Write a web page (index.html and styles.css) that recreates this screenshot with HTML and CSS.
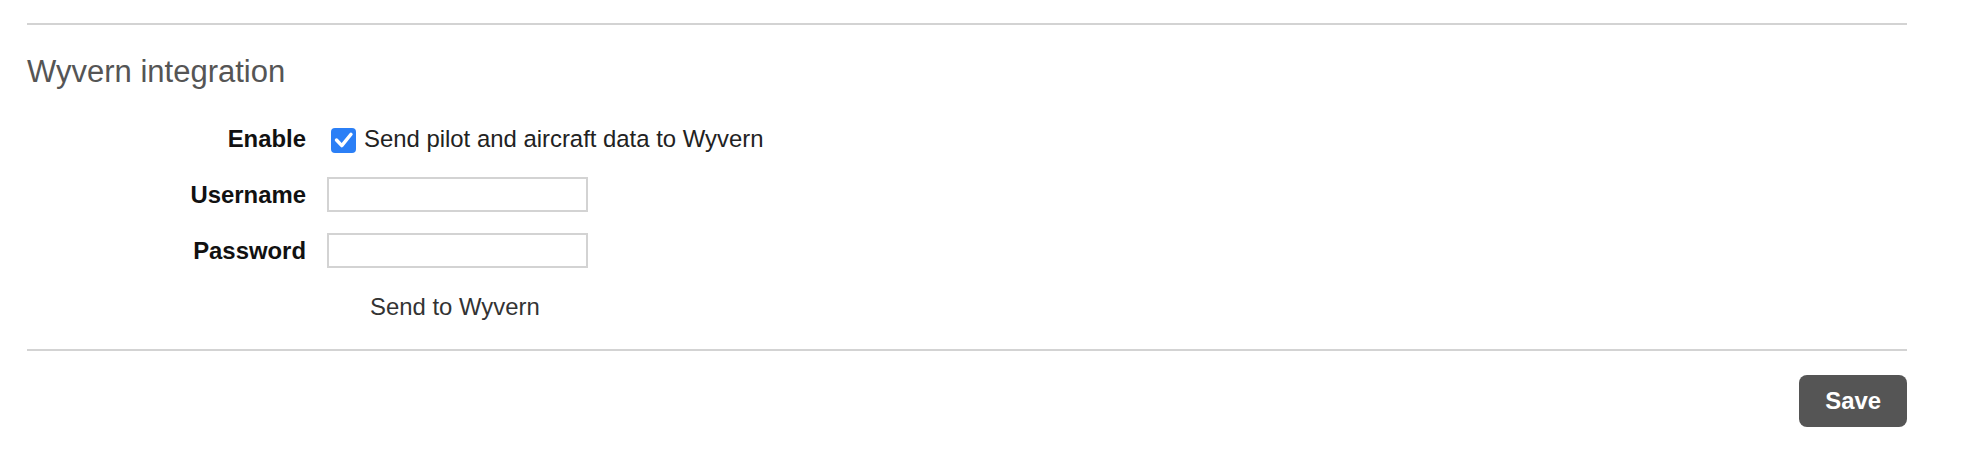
FILE: index.html
```html
<!DOCTYPE html>
<html lang="en">
<head>
<meta charset="utf-8">
<title>Wyvern integration</title>
<link rel="stylesheet" href="styles.css">
</head>
<body>
<div class="page">
  <hr class="rule">
  <h2 class="section-title">Wyvern integration</h2>
  <form class="form-grid">
    <span class="field-label field-label--top">Enable</span>
    <label class="check-row">
      <span class="checkbox" role="checkbox" aria-checked="true">
        <svg viewBox="0 0 25 25" width="25" height="25"><path d="M5.5 12 L10.8 17.6 L20 6.2" fill="none" stroke="#fff" stroke-width="3.4" stroke-linecap="round" stroke-linejoin="round"/></svg>
      </span>
      <span class="check-text">Send pilot and aircraft data to Wyvern</span>
    </label>

    <label class="field-label" for="wy-user">Username</label>
    <input class="text-input" id="wy-user" type="text">

    <label class="field-label" for="wy-pass">Password</label>
    <input class="text-input" id="wy-pass" type="password">

    <span class="spacer"></span>
    <button class="link-button" type="button">Send to Wyvern</button>
  </form>
  <hr class="rule rule--bottom">
  <div class="actions">
    <button class="save-button" type="button">Save</button>
  </div>
</div>
</body>
</html>
```
FILE: styles.css
```css
html, body {
  margin: 0;
  padding: 0;
  background: #fff;
}

body {
  font-family: "Liberation Sans", Arial, sans-serif;
  font-size: 23.9px;
  line-height: 27px;
  color: #222;
}

.page {
  width: 1880px;
  padding-left: 27px;
}

.rule {
  margin: 23px 0 0 0;
  border: 0;
  border-top: 2px solid #d3d3d3;
  height: 0;
}

.rule--bottom {
  margin-top: 25px;
}

.section-title {
  margin: 29px 0 0 0;
  font-size: 31px;
  line-height: 36px;
  font-weight: normal;
  color: #555;
}

.form-grid {
  margin-top: 35px;
  display: grid;
  grid-template-columns: 279px 261px;
  column-gap: 21px;
  row-gap: 21px;
  align-items: center;
}

.field-label {
  text-align: right;
  font-weight: bold;
  color: #111;
}

.field-label--top {
  align-self: start;
}

.check-row {
  display: flex;
  align-items: flex-start;
  white-space: nowrap;
  height: 31px;
}

.checkbox {
  flex: none;
  width: 25px;
  height: 25px;
  margin: 3px 8px 0 4px;
  background: #2b7ff6;
  border-radius: 4px;
  display: flex;
}

.checkbox svg {
  display: block;
}

.check-text {
  color: #222;
}

.text-input {
  box-sizing: border-box;
  width: 261px;
  height: 35px;
  margin: 0;
  border: 2px solid #d3d3d3;
  border-radius: 0;
  padding: 0 6px;
  font: inherit;
  background: #fff;
}

.link-button {
  justify-self: start;
  margin: 0;
  border: 0;
  background: transparent;
  padding: 4px 0 4px 43px;
  font: inherit;
  line-height: 27px;
  color: #333;
  cursor: pointer;
}

.actions {
  display: flex;
  justify-content: flex-end;
  margin-top: 24px;
}

.save-button {
  margin: 0;
  border: 0;
  border-radius: 8px;
  background: #555;
  color: #fff;
  font: inherit;
  font-weight: bold;
  line-height: 27px;
  padding: 11.5px 26px 13.5px;
  cursor: pointer;
}
```
